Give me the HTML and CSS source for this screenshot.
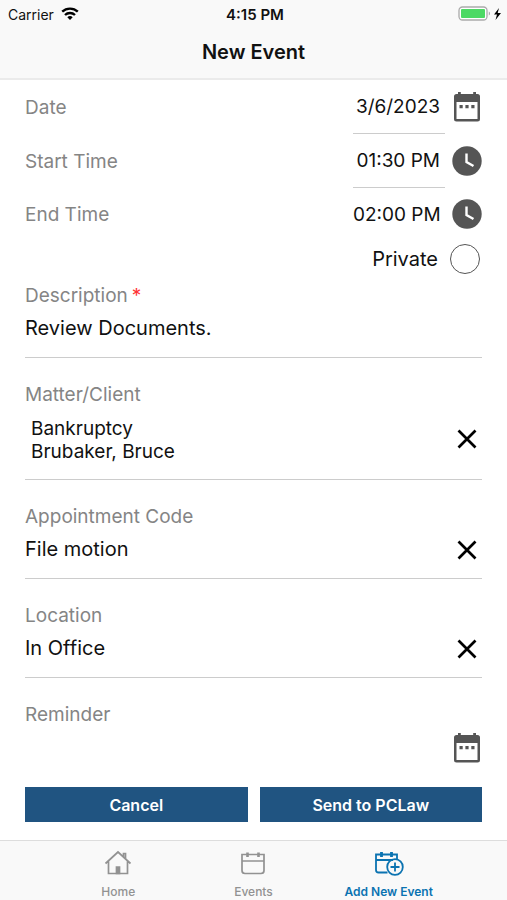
FILE: index.html
```html
<!DOCTYPE html>
<html lang="en">
  <head>
    <meta charset="UTF-8" />
    <meta name="viewport" content="width=device-width, initial-scale=1.0" />
    <title>New Event</title>
    <link rel="stylesheet" href="styles.css">
  </head>
  <body>
    <header>
      <div class="status-bar">
        <div class="carrier">
          <span>Carrier</span>
          <svg width="18" height="14" viewBox="0 0 18 14" fill="none" stroke="#000" stroke-width="2.4">
            <path d="M1.2 4.700a11.500 11.500 0 0 1 15.600 0" />
            <path d="M4 8a7.300 7.300 0 0 1 10 0" />
            <path d="M9 13l-2.700-2.800a4 4 0 0 1 5.400 0z" fill="#000" stroke="none" />
          </svg>
        </div>
        <span class="clock">4:15 PM</span>
        <div class="battery">
          <svg width="44" height="16" viewBox="0 0 44 16">
            <rect x="1" y="1" width="28" height="13" rx="3.5" fill="#fff" stroke="#aaa" stroke-width="1.3" />
            <rect x="3" y="3" width="24" height="9" rx="1" fill="#4cd964" />
            <path d="M30.800 5.500v4c1.700-.6 1.700-3.400 0-4z" fill="#aaa" />
            <path d="M41 2L36 8.500h3L37.500 14 43 7h-3.300z" fill="#000" />
          </svg>
        </div>
      </div>
      <h1>New Event</h1>
    </header>

    <form class="event-form">
      <div class="row">
        <label for="date">Date</label>
        <input type="text" id="date" value="3/6/2023" />
        <button type="button" class="icon-btn" aria-label="Pick date">
          <svg width="30" height="30" viewBox="0 0 30 30">
            <path fill="#555" fill-rule="evenodd" d="M6 0h2.800v2h12.400V0H24v2h1.500A2.500 2.500 0 0 1 28 4.500V27a2.500 2.500 0 0 1-2.500 2.500h-21A2.500 2.500 0 0 1 2 27V4.500A2.500 2.500 0 0 1 4.500 2H6zM4.500 10v17h21V10z" />
            <path fill="#555" d="M7.500 13h3.200v3.200H7.500zM13.400 13h3.200v3.200h-3.200zM19.300 13h3.200v3.200h-3.200z" />
          </svg>
        </button>
      </div>
      <div class="row">
        <label for="start">Start Time</label>
        <input type="text" id="start" value="01:30 PM" />
        <button type="button" class="icon-btn" aria-label="Pick start time">
          <svg width="30" height="30" viewBox="0 0 30 30">
            <circle cx="15" cy="15" r="14.700" fill="#555" />
            <path d="M14.500 7.500v8.500l7 4" fill="none" stroke="#fff" stroke-width="2.400" />
          </svg>
        </button>
      </div>
      <div class="row last">
        <label for="end">End Time</label>
        <input type="text" id="end" value="02:00 PM" />
        <button type="button" class="icon-btn" aria-label="Pick end time">
          <svg width="30" height="30" viewBox="0 0 30 30">
            <circle cx="15" cy="15" r="14.700" fill="#555" />
            <path d="M14.500 7.500v8.500l7 4" fill="none" stroke="#fff" stroke-width="2.400" />
          </svg>
        </button>
      </div>
      <div class="private">
        <label for="private">Private</label>
        <input type="checkbox" id="private" />
      </div>

      <div class="field first">
        <label for="description">Description<span class="required">*</span></label>
        <div class="value">
          <input type="text" id="description" value="Review Documents." />
        </div>
      </div>
      <div class="field">
        <label for="matter">Matter/Client</label>
        <div class="value">
          <textarea id="matter" rows="2">Bankruptcy
Brubaker, Bruce</textarea>
          <button type="button" class="icon-btn" aria-label="Clear matter">
            <svg width="30" height="20" viewBox="0 0 30 20"><path d="M6.500 1.500l17 17M23.500 1.500l-17 17" stroke="#000" stroke-width="2.700" /></svg>
          </button>
        </div>
      </div>
      <div class="field">
        <label for="code">Appointment Code</label>
        <div class="value">
          <input type="text" id="code" value="File motion" />
          <button type="button" class="icon-btn" aria-label="Clear appointment code">
            <svg width="30" height="20" viewBox="0 0 30 20"><path d="M6.500 1.500l17 17M23.500 1.500l-17 17" stroke="#000" stroke-width="2.700" /></svg>
          </button>
        </div>
      </div>
      <div class="field">
        <label for="location">Location</label>
        <div class="value">
          <input type="text" id="location" value="In Office" />
          <button type="button" class="icon-btn" aria-label="Clear location">
            <svg width="30" height="20" viewBox="0 0 30 20"><path d="M6.500 1.500l17 17M23.500 1.500l-17 17" stroke="#000" stroke-width="2.700" /></svg>
          </button>
        </div>
      </div>
      <div class="field last">
        <label for="reminder">Reminder</label>
        <div class="value">
          <input type="text" id="reminder" />
          <button type="button" class="icon-btn" aria-label="Pick reminder">
            <svg width="30" height="30" viewBox="0 0 30 30">
              <path fill="#555" fill-rule="evenodd" d="M6 0h2.800v2h12.400V0H24v2h1.500A2.500 2.500 0 0 1 28 4.500V27a2.500 2.500 0 0 1-2.500 2.500h-21A2.500 2.500 0 0 1 2 27V4.500A2.500 2.500 0 0 1 4.500 2H6zM4.500 10v17h21V10z" />
              <path fill="#555" d="M7.500 13h3.200v3.200H7.500zM13.400 13h3.200v3.200h-3.200zM19.300 13h3.200v3.200h-3.200z" />
            </svg>
          </button>
        </div>
      </div>

      <div class="actions">
        <button type="button">Cancel</button>
        <button type="submit">Send to PCLaw</button>
      </div>
    </form>

    <nav class="bottom-tab">
      <a href="#home">
        <svg width="30" height="26" viewBox="0 0 30 26" fill="none" stroke="currentColor" stroke-width="1.700">
          <path d="M2.500 13.500L15 2l12.500 11.500M5.500 11.500v12h19v-12M20.500 6.500V3.500h2v5" />
          <path d="M13.500 17h3v6.500h-3z" fill="currentColor" />
        </svg>
        <span>Home</span>
      </a>
      <a href="#events">
        <svg width="30" height="26" viewBox="0 0 30 26" fill="none" stroke="currentColor" stroke-width="1.700">
          <path d="M4 4.500h22v16a3 3 0 0 1-3 3H7a3 3 0 0 1-3-3zM4 11h22" />
          <path d="M9.500 2.500v4.500M20.500 2.500v4.500" stroke-width="2.600" />
        </svg>
        <span>Events</span>
      </a>
      <a href="#add" class="active">
        <svg width="30" height="26" viewBox="0 0 30 26" fill="none" stroke="currentColor" stroke-width="1.800">
          <path d="M13.500 22.500H4.500A2.500 2.500 0 0 1 2 20V4.500h21V9M2 10h17" />
          <path d="M7.500 2v5M17.500 2v5" stroke-width="2.800" />
          <circle cx="21" cy="17" r="7.800" />
          <path d="M21 12.500v9M16.500 17h9" />
        </svg>
        <span>Add New Event</span>
      </a>
    </nav>
  </body>
</html>
```
FILE: styles.css
```css
* {
  box-sizing: border-box;
}
body {
  display: flex;
  flex-direction: column;
  min-height: 100vh;
  margin: 0;
  background-color: #fff;
  color: #111;
  font-family: Inter, "Liberation Sans", sans-serif;
  font-size: 20px;
}
header {
  height: 80px;
  background-color: #f9f9f9;
  border-bottom: 2px solid #ebebeb;
}
.status-bar {
  display: grid;
  grid-template-columns: 1fr auto 1fr;
  align-items: center;
  height: 28px;
  padding: 0 5px 0 8px;
  font-size: 14px;
}
.carrier {
  display: flex;
  align-items: center;
  gap: 7px;
}
.clock {
  font-size: 15px;
  font-weight: 600;
}
.battery {
  display: flex;
  justify-content: flex-end;
}
h1 {
  margin: 0;
  font-size: 20px;
  font-weight: 600;
  line-height: 48px;
  text-align: center;
}
input,
textarea,
button {
  margin: 0;
  padding: 0;
  border: none;
  border-radius: 0;
  background-color: transparent;
  color: inherit;
  font: inherit;
  outline: none;
}
svg {
  display: block;
}
.icon-btn {
  flex: none;
  width: 30px;
  cursor: pointer;
}
.event-form {
  padding: 0 25px 18px;
}
.row {
  display: flex;
  align-items: center;
  height: 54px;
}
.row.last {
  height: 52px;
}
.row label,
.field label {
  color: #858585;
  font-size: 19px;
}
.row label {
  flex: 1;
}
.row input {
  width: 92px;
  height: 100%;
  margin-right: 7px;
  padding-right: 5px;
  border-bottom: 1px solid #ccc;
  font-size: 19px;
  text-align: right;
}
.row.last input {
  border-bottom: none;
}
.private {
  display: flex;
  justify-content: flex-end;
  align-items: center;
  gap: 12px;
  height: 37px;
  padding-right: 2px;
}
.private input {
  appearance: none;
  width: 30px;
  height: 30px;
  border: 1px solid #555;
  border-radius: 50%;
}
.private input:checked {
  background-color: #205481;
}
.field {
  padding: 25px 0 16px;
  border-bottom: 1px solid #ccc;
}
.field.first {
  padding-top: 7px;
}
.field.last {
  padding-bottom: 24px;
  border-bottom: none;
}
.field label {
  display: block;
  line-height: 24px;
}
.required {
  margin-left: 4px;
  color: #f33;
}
.value {
  display: flex;
  align-items: center;
  padding-top: 8px;
}
.value input,
.value textarea {
  flex: 1;
  min-width: 0;
}
.value input {
  height: 25px;
  padding-bottom: 2px;
}
.value textarea {
  height: 48px;
  padding: 2px 6px 0;
  font-size: 19px;
  line-height: 23px;
  resize: none;
  overflow: hidden;
}
.field.last .value {
  padding-top: 6px;
}
.actions {
  display: grid;
  grid-template-columns: 1fr 1fr;
  gap: 12px;
}
.actions button {
  height: 35px;
  background-color: #205481;
  color: #fff;
  font-size: 16px;
  font-weight: 600;
  cursor: pointer;
}
.bottom-tab {
  display: grid;
  grid-template-columns: repeat(3, 1fr);
  height: 60px;
  margin-top: auto;
  padding: 9px 10% 0;
  background-color: #f9f9f9;
  border-top: 1px solid #ddd;
}
.bottom-tab a {
  display: flex;
  flex-direction: column;
  align-items: center;
  gap: 8px;
  color: #929292;
  font-size: 12px;
  font-weight: 500;
  text-decoration: none;
}
.bottom-tab .active {
  color: #0b73b1;
  font-weight: 600;
}
```
